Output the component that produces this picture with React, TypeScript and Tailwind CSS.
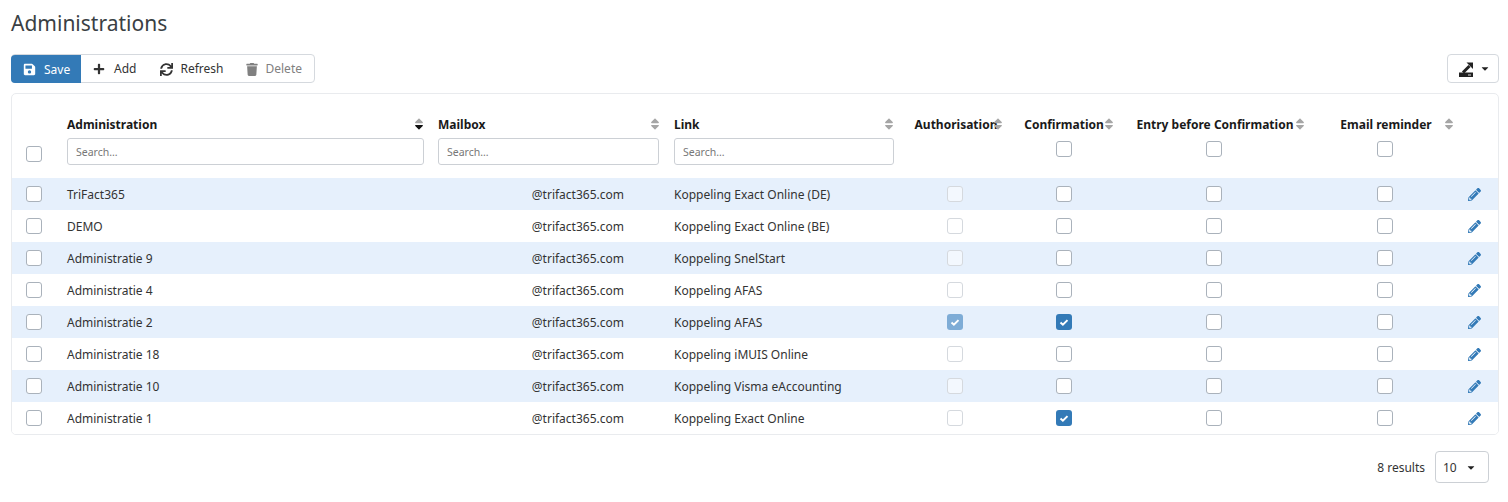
import { FaCaretDown, FaPencilAlt, FaPlus, FaSave, FaSortDown, FaSortUp, FaSync, FaTrash } from "react-icons/fa";

type Row = {
  name: string;
  link: string;
  auth?: boolean;
  confirm?: boolean;
};

const ROWS: Row[] = [
  { name: "TriFact365", link: "Koppeling Exact Online (DE)" },
  { name: "DEMO", link: "Koppeling Exact Online (BE)" },
  { name: "Administratie 9", link: "Koppeling SnelStart" },
  { name: "Administratie 4", link: "Koppeling AFAS" },
  { name: "Administratie 2", link: "Koppeling AFAS", auth: true, confirm: true },
  { name: "Administratie 18", link: "Koppeling iMUIS Online" },
  { name: "Administratie 10", link: "Koppeling Visma eAccounting" },
  { name: "Administratie 1", link: "Koppeling Exact Online", confirm: true },
];

function Check({ checked, disabled }: { checked?: boolean; disabled?: boolean }) {
  if (checked) {
    return (
      <span
        className={`inline-flex h-4 w-4 items-center justify-center rounded-[3px] align-middle ${
          disabled ? "bg-[#7eacd6]" : "bg-[#337ab7]"
        }`}
      >
        <svg viewBox="0 0 16 16" className="h-4 w-4" fill="none">
          <path d="M4.500 8.500l2.400 2.200 4.600-4.600" stroke="#fff" strokeWidth="2" />
        </svg>
      </span>
    );
  }
  return (
    <span
      className={`inline-block h-4 w-4 rounded-[3px] border align-middle ${
        disabled ? "border-[#d5d9de] bg-white/50" : "border-[#aab2bb] bg-white"
      }`}
    />
  );
}

function SortIcon({ active, className }: { active?: boolean; className: string }) {
  return (
    <span className={`absolute top-[23px] h-[14px] w-[10px] ${className}`}>
      <FaSortUp className="absolute left-0 top-0 h-[14px] w-[10px] text-[#a6a6a6]" />
      <FaSortDown className={`absolute left-0 top-0 h-[14px] w-[10px] ${active ? "text-[#111]" : "text-[#a6a6a6]"}`} />
    </span>
  );
}

function Search() {
  return (
    <input
      placeholder="Search..."
      className="block h-[27px] w-full rounded-[3px] border border-[#ccd0d5] bg-white px-2 text-[10.500px] font-normal placeholder:text-[#777] outline-none"
    />
  );
}

export default function App() {
  return (
    <div
      className="h-[502px] bg-white text-[#333] text-[12px]"
      style={{ fontFamily: '"Noto Sans", "Open Sans", sans-serif' }}
    >
      <div className="pl-[11px] pr-[9px] pt-[8px]">
        <h1 className="h-[46px] text-[21px] font-normal leading-[31px] text-[#3a3f44]">Administrations</h1>

        <div className="flex items-center justify-between">
          <div className="flex h-[29px] w-[304px] items-stretch rounded-[4px] border border-[#d5d9de] pt-px">
            <button className="-my-px -ml-px flex w-[71px] items-center gap-[8px] rounded-l-[4px] bg-[#337ab7] pl-[12px] pt-px text-white">
              <FaSave className="h-[13px] w-[13px]" />
              Save
            </button>
            <button className="flex items-center gap-[9px] pl-[12px] pr-[12px] text-[#333]">
              <FaPlus className="h-[12px] w-[12px]" />
              Add
            </button>
            <button className="flex items-center gap-[7px] pl-[12px] pr-[12px] text-[#333]">
              <FaSync className="h-[13px] w-[13px]" />
              Refresh
            </button>
            <button className="flex items-center gap-[8px] pl-[10px] pr-[12px] text-[#808080]">
              <FaTrash className="h-[13px] w-[12px]" />
              Delete
            </button>
          </div>

          <button className="flex h-[29px] w-[52px] items-center justify-center gap-[6px] rounded-[4px] border border-[#d5d9de] pl-px">
            <svg viewBox="0 0 16 16" className="h-[16px] w-[16px]">
              <path d="M0 11.500h14V16H0z" fill="#222" />
              <path d="M9 14h3" stroke="#ddd" strokeWidth="1" />
              <path d="M7.500 1.500h6.500v6.500z" fill="#222" />
              <path d="M4 11.500L10.500 5" fill="none" stroke="#222" strokeWidth="3" />
            </svg>
            <FaCaretDown className="h-[11px] w-[8px] text-[#222]" />
          </button>
        </div>

        <div className="mt-[10px] overflow-hidden rounded-[5px] border border-[#e9ebee]">
          <table className="w-full table-fixed border-collapse">
            <colgroup>
              <col className="w-[48px]" />
              <col className="w-[371px]" />
              <col className="w-[235px]" />
              <col className="w-[235px]" />
              <col className="w-[108px]" />
              <col className="w-[110px]" />
              <col className="w-[190px]" />
              <col className="w-[152px]" />
              <col />
            </colgroup>
            <thead>
              <tr className="h-[84px] align-top">
                <th className="pr-[4px] pt-[50px] text-center">
                  <Check />
                </th>
                <th className="relative px-[7px] pt-[22px] text-left font-bold text-[#1a1a1a]">
                  <div className="h-[22px] leading-[17px]">Administration</div>
                  <Search />
                  <SortIcon active className="right-[7px]" />
                </th>
                <th className="relative px-[7px] pt-[22px] text-left font-bold text-[#1a1a1a]">
                  <div className="h-[22px] leading-[17px]">Mailbox</div>
                  <Search />
                  <SortIcon className="right-[6px]" />
                </th>
                <th className="relative pl-[8px] pr-[7px] pt-[22px] text-left font-bold text-[#1a1a1a]">
                  <div className="h-[22px] leading-[17px]">Link</div>
                  <Search />
                  <SortIcon className="right-[7px]" />
                </th>
                <th className="relative pl-[2px] pt-[22px] text-center font-bold text-[#1a1a1a]">
                  <div className="h-[23px] whitespace-nowrap leading-[17px]">Authorisation</div>
                  <SortIcon className="right-[6px]" />
                </th>
                <th className="relative pt-[22px] text-center font-bold text-[#1a1a1a]">
                  <div className="h-[23px] leading-[17px]">Confirmation</div>
                  <Check />
                  <SortIcon className="right-[5px]" />
                </th>
                <th className="relative pt-[22px] text-center font-bold text-[#1a1a1a]">
                  <div className="h-[23px] pl-[2px] leading-[17px]">Entry before Confirmation</div>
                  <Check />
                  <SortIcon className="right-[4px]" />
                </th>
                <th className="relative pt-[22px] text-center font-bold text-[#1a1a1a]">
                  <div className="h-[23px] pl-[2px] leading-[17px]">Email reminder</div>
                  <Check />
                  <SortIcon className="right-[7px]" />
                </th>
                <th />
              </tr>
            </thead>
            <tbody>
              {ROWS.map((r, i) => (
                <tr key={r.name} className={`h-[32px] ${i % 2 === 0 ? "bg-[#e6f0fc]" : "bg-white"}`}>
                  <td className="pb-px pr-[4px] text-center">
                    <Check />
                  </td>
                  <td className="px-[7px] pt-px">{r.name}</td>
                  <td className="pr-[42px] pt-px text-right">@trifact365.com</td>
                  <td className="pl-[8px] pt-px">{r.link}</td>
                  <td className="pb-px text-center">
                    <Check disabled checked={r.auth} />
                  </td>
                  <td className="pb-px text-center">
                    <Check checked={r.confirm} />
                  </td>
                  <td className="pb-px text-center">
                    <Check />
                  </td>
                  <td className="pb-px text-center">
                    <Check />
                  </td>
                  <td className="pl-[7px]">
                    <FaPencilAlt className="h-[13px] w-[13px] text-[#337ab7]" />
                  </td>
                </tr>
              ))}
            </tbody>
          </table>
        </div>

        <div className="mt-[16px] flex items-center justify-end gap-[10px] pr-[10px]">
          <span className="pt-px">8 results</span>
          <div className="flex h-[32px] w-[54px] items-center justify-between rounded-[4px] border border-[#ccd0d5] pl-[7px] pr-[13px] pt-px">
            10
            <FaCaretDown className="h-[11px] w-[8px] text-[#222]" />
          </div>
        </div>
      </div>
    </div>
  );
}
